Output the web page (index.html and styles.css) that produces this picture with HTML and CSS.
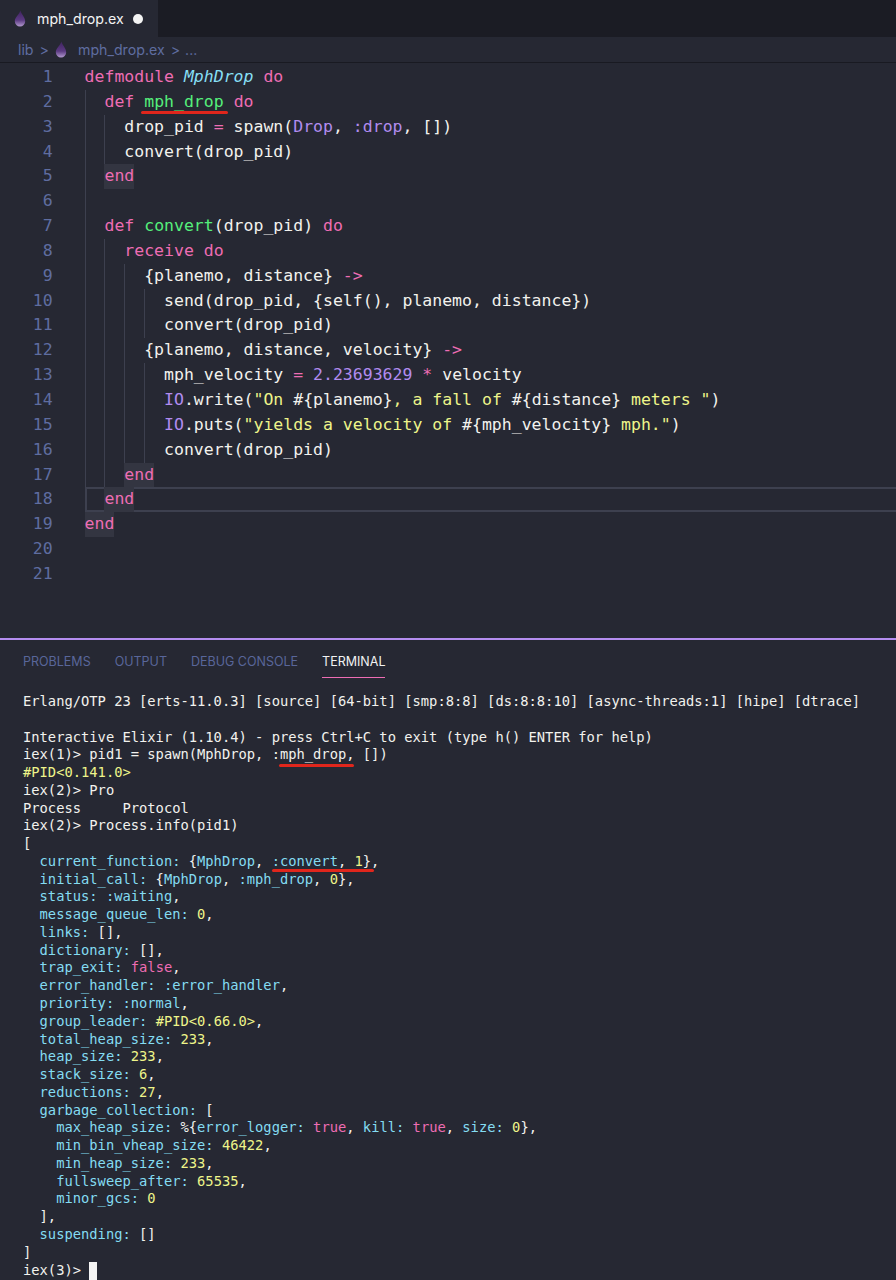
FILE: index.html
```html
<!DOCTYPE html>
<html lang="en">
<head>
<meta charset="utf-8">
<title>mph_drop.ex</title>
<link rel="stylesheet" href="styles.css">
</head>
<body>
<svg class="defs" width="0" height="0" aria-hidden="true"><defs><linearGradient id="dropfill" x1="0" y1="0" x2="0" y2="1"><stop offset="0" stop-color="#3f2360"/><stop offset="0.6" stop-color="#5b3a82"/><stop offset="1" stop-color="#b39ad0"/></linearGradient></defs></svg>
<div class="tabbar">
  <div class="tab">
    <svg class="drop" viewBox="0 0 12 18"><path d="M6.5 0.5C7 4 11.5 7.5 11.5 12A5.5 5.5 0 0 1 0.5 12C0.5 7.5 5 5 6.5 0.5Z" fill="url(#dropfill)"/></svg>
    <span class="tabname">mph_drop.ex</span>
    <span class="dot"></span>
  </div>
</div>
<div class="crumbs">
  <span>lib</span><span class="chev">&gt;</span>
  <svg class="drop small" viewBox="0 0 12 18"><path d="M6.5 0.5C7 4 11.5 7.5 11.5 12A5.5 5.5 0 0 1 0.5 12C0.5 7.5 5 5 6.5 0.5Z" fill="url(#dropfill)"/></svg>
  <span class="crumbfile">mph_drop.ex</span><span class="chev">&gt;</span><span>...</span>
</div>
<main class="editor">
  <div class="ln"><span class="no">1</span><code><b class="k">defmodule</b> <i class="m">MphDrop</i> <b class="k">do</b></code></div>
  <div class="ln"><span class="no">2</span><u class="ig"></u><code><b class="k">def</b> <span class="mark"><b class="f">mph_drop</b></span> <b class="k">do</b></code></div>
  <div class="ln"><span class="no">3</span><u class="ig"></u><u class="ig"></u><code>drop_pid <b class="k">=</b> spawn(<b class="p">Drop</b>, <b class="p">:drop</b>, [])</code></div>
  <div class="ln"><span class="no">4</span><u class="ig"></u><u class="ig"></u><code>convert(drop_pid)</code></div>
  <div class="ln"><span class="no">5</span><u class="ig"></u><code><b class="k hl">end</b></code></div>
  <div class="ln"><span class="no">6</span><u class="ig"></u><code></code></div>
  <div class="ln"><span class="no">7</span><u class="ig"></u><code><b class="k">def</b> <b class="f">convert</b>(drop_pid) <b class="k">do</b></code></div>
  <div class="ln"><span class="no">8</span><u class="ig"></u><u class="ig"></u><code><b class="k">receive do</b></code></div>
  <div class="ln"><span class="no">9</span><u class="ig"></u><u class="ig"></u><u class="ig"></u><code>{planemo, distance} <b class="k">-&gt;</b></code></div>
  <div class="ln"><span class="no">10</span><u class="ig"></u><u class="ig"></u><u class="ig"></u><u class="ig"></u><code>send(drop_pid, {self(), planemo, distance})</code></div>
  <div class="ln"><span class="no">11</span><u class="ig"></u><u class="ig"></u><u class="ig"></u><u class="ig"></u><code>convert(drop_pid)</code></div>
  <div class="ln"><span class="no">12</span><u class="ig"></u><u class="ig"></u><u class="ig"></u><code>{planemo, distance, velocity} <b class="k">-&gt;</b></code></div>
  <div class="ln"><span class="no">13</span><u class="ig"></u><u class="ig"></u><u class="ig"></u><u class="ig"></u><code>mph_velocity <b class="k">=</b> <b class="p">2.23693629</b> <b class="k">*</b> velocity</code></div>
  <div class="ln"><span class="no">14</span><u class="ig"></u><u class="ig"></u><u class="ig"></u><u class="ig"></u><code><b class="p">IO</b>.write(<b class="s">"On </b>#{planemo}<b class="s">, a fall of </b>#{distance}<b class="s"> meters "</b>)</code></div>
  <div class="ln"><span class="no">15</span><u class="ig"></u><u class="ig"></u><u class="ig"></u><u class="ig"></u><code><b class="p">IO</b>.puts(<b class="s">"yields a velocity of </b>#{mph_velocity}<b class="s"> mph."</b>)</code></div>
  <div class="ln"><span class="no">16</span><u class="ig"></u><u class="ig"></u><u class="ig"></u><u class="ig"></u><code>convert(drop_pid)</code></div>
  <div class="ln"><span class="no">17</span><u class="ig"></u><u class="ig"></u><code><b class="k hl">end</b></code></div>
  <div class="ln"><span class="no">18</span><div class="cur"><u class="ig blank"></u><code><b class="k hl">end</b></code></div></div>
  <div class="ln"><span class="no">19</span><code><b class="k hl">end</b></code></div>
  <div class="ln"><span class="no">20</span><code></code></div>
  <div class="ln"><span class="no">21</span><code></code></div>
</main>
<section class="panel">
  <nav class="ptabs">
    <span>PROBLEMS</span><span>OUTPUT</span><span>DEBUG CONSOLE</span><span class="on">TERMINAL</span>
  </nav>
  <div class="term">
    <div class="tl">Erlang/OTP 23 [erts-11.0.3] [source] [64-bit] [smp:8:8] [ds:8:8:10] [async-threads:1] [hipe] [dtrace]</div>
    <div class="tl"></div>
    <div class="tl">Interactive Elixir (1.10.4) - press Ctrl+C to exit (type h() ENTER for help)</div>
    <div class="tl">iex(1)&gt; pid1 = spawn(MphDrop, :<span class="mark two">mph_drop,</span> [])</div>
    <div class="tl"><b class="s">#PID&lt;0.141.0&gt;</b></div>
    <div class="tl">iex(2)&gt; Pro</div>
    <div class="tl">Process     Protocol</div>
    <div class="tl">iex(2)&gt; Process.info(pid1)</div>
    <div class="tl">[</div>
    <div class="tl">  <b class="c">current_function:</b> {<b class="c">MphDrop</b>, <span class="mark three"><b class="c">:convert</b>, <b class="s">1</b>},</span></div>
    <div class="tl">  <b class="c">initial_call:</b> {<b class="c">MphDrop</b>, <b class="c">:mph_drop</b>, <b class="s">0</b>},</div>
    <div class="tl">  <b class="c">status:</b> <b class="c">:waiting</b>,</div>
    <div class="tl">  <b class="c">message_queue_len:</b> <b class="s">0</b>,</div>
    <div class="tl">  <b class="c">links:</b> [],</div>
    <div class="tl">  <b class="c">dictionary:</b> [],</div>
    <div class="tl">  <b class="c">trap_exit:</b> <b class="k">false</b>,</div>
    <div class="tl">  <b class="c">error_handler:</b> <b class="c">:error_handler</b>,</div>
    <div class="tl">  <b class="c">priority:</b> <b class="c">:normal</b>,</div>
    <div class="tl">  <b class="c">group_leader:</b> <b class="s">#PID&lt;0.66.0&gt;</b>,</div>
    <div class="tl">  <b class="c">total_heap_size:</b> <b class="s">233</b>,</div>
    <div class="tl">  <b class="c">heap_size:</b> <b class="s">233</b>,</div>
    <div class="tl">  <b class="c">stack_size:</b> <b class="s">6</b>,</div>
    <div class="tl">  <b class="c">reductions:</b> <b class="s">27</b>,</div>
    <div class="tl">  <b class="c">garbage_collection:</b> [</div>
    <div class="tl">    <b class="c">max_heap_size:</b> %{<b class="c">error_logger:</b> <b class="k">true</b>, <b class="c">kill:</b> <b class="k">true</b>, <b class="c">size:</b> <b class="s">0</b>},</div>
    <div class="tl">    <b class="c">min_bin_vheap_size:</b> <b class="s">46422</b>,</div>
    <div class="tl">    <b class="c">min_heap_size:</b> <b class="s">233</b>,</div>
    <div class="tl">    <b class="c">fullsweep_after:</b> <b class="s">65535</b>,</div>
    <div class="tl">    <b class="c">minor_gcs:</b> <b class="s">0</b></div>
    <div class="tl">  ],</div>
    <div class="tl">  <b class="c">suspending:</b> []</div>
    <div class="tl">]</div>
    <div class="tl">iex(3)&gt; <span class="caret"></span></div>
  </div>
</section>
</body>
</html>
```
FILE: styles.css
```css
* { box-sizing: border-box; }
html, body { margin: 0; height: 1280px; overflow: hidden; }
body {
  width: 896px;
  background: #262833;
  color: #f2f2ee;
  font-family: "DejaVu Sans Mono", "Liberation Mono", monospace;
  display: flex;
  flex-direction: column;
}
.defs { position: absolute; }
b, i, u { font-weight: 400; text-decoration: none; }

.tabbar { height: 37px; background: #1b1c24; display: flex; flex: none; }
.tab {
  width: 158px;
  background: #262833;
  display: flex;
  align-items: center;
  padding-left: 14px;
  font-family: Inter, "Noto Sans", sans-serif;
}
.drop { width: 12px; height: 17px; flex: none; }
.tabname { margin-left: 11px; font-size: 14.2px; color: #f4f4f4; }
.dot { width: 10px; height: 10px; border-radius: 50%; background: #f4f4f4; margin-left: 9px; }

.crumbs {
  height: 26px;
  flex: none;
  display: flex;
  align-items: center;
  padding-left: 18px;
  border-bottom: 1px solid #191a22;
  color: #5f6da0;
  font-family: Inter, "Noto Sans", sans-serif;
  font-size: 14.2px;
}
.chev { margin: 0 5px 0 6px; }
.small { margin: 0 11px 0 1px; }

.editor { height: 575px; flex: none; padding-top: 2px; font-size: 16.5px; line-height: 24.85px; }
.ln { display: flex; height: 24.85px; }
.no { width: 84.6px; flex: none; padding-right: 32px; text-align: right; color: #5f6da0; }
.ig { flex: none; width: 19.87px; box-shadow: inset 1px 0 0 #3d404f; }
.ig.blank { box-shadow: none; }
code { font: inherit; white-space: pre; }
.cur { flex: 1; display: flex; box-shadow: inset 0 2px 0 #3d404f, inset 0 -2px 0 #3d404f, inset 2px 0 0 #3d404f; }

.k { color: #ee6db4; }
.m { color: #86dff5; font-style: italic; }
.f { color: #55ef7b; }
.p { color: #b18cf0; }
.s { color: #eef58a; }
.c { color: #84dcf2; }
.hl { display: inline-block; height: 24.85px; vertical-align: top; background: #333541; }

.mark { position: relative; }
.mark::after {
  content: "";
  position: absolute;
  left: -3px;
  right: -4px;
  bottom: -3px;
  height: 3px;
  border-radius: 2px;
  background: #e0261c;
}
.mark.two::after { left: -1px; right: 1px; bottom: -5px; }
.mark.three::after { left: 0; right: 5px; bottom: -3px; }

.panel { flex: 1; min-height: 0; border-top: 2px solid #b48df0; }
.ptabs {
  height: 39px;
  padding: 0 0 0 23px;
  display: flex;
  gap: 24px;
  font-family: Inter, "Noto Sans", sans-serif;
  font-size: 12.5px;
  color: #59669a;
}
.ptabs span { padding-top: 14px; height: 38px; }
.ptabs .on { color: #f2f2f2; border-bottom: 1px solid #ee6db4; }
.term {
  padding: 14px 0 0 23px;
  font-size: 13.77px;
  line-height: 17.78px;
}
.tl { height: 17.78px; white-space: pre; }
.caret { display: inline-block; width: 8px; height: 18px; background: #f4f4f4; vertical-align: -5px; }
```
